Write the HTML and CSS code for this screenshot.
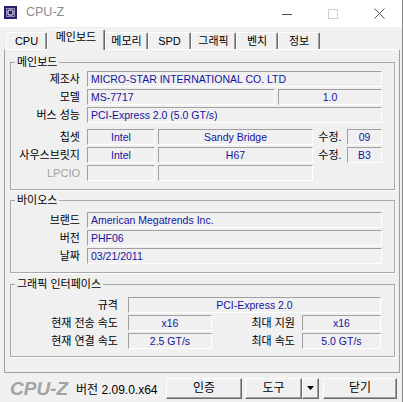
FILE: index.html
```html
<!DOCTYPE html>
<html lang="ko">
<head>
<meta charset="utf-8">
<title>CPU-Z</title>
<link rel="stylesheet" href="styles.css">
</head>
<body>
<div class="window">
  <header class="titlebar">
    <svg class="app-icon" width="13" height="13" viewBox="0 0 13 13">
      <rect width="13" height="13" fill="#2d1d6e"/>
      <rect x="2.5" y="2.5" width="8" height="8" fill="none" stroke="#fff" stroke-width="1" stroke-dasharray="1 1"/>
      <rect x="4" y="4" width="5" height="5" rx="1" fill="none" stroke="#fff" stroke-width="1"/>
    </svg>
    <span class="title">CPU-Z</span>
    <div class="controls">
      <span class="ctl"><svg width="10" height="10" viewBox="0 0 10 10"><line x1="0" y1="5.5" x2="10" y2="5.5" stroke="#4a4a4a" stroke-width="1"/></svg></span>
      <span class="ctl"><svg width="10" height="10" viewBox="0 0 10 10"><rect x="0.5" y="0.5" width="9" height="9" fill="none" stroke="#cfcfcf" stroke-width="1"/></svg></span>
      <span class="ctl"><svg width="11" height="11" viewBox="0 0 11 11"><path d="M0.5 0.5 L10.5 10.5 M10.5 0.5 L0.5 10.5" stroke="#555" stroke-width="1" fill="none"/></svg></span>
    </div>
  </header>

  <nav class="tabs">
    <span class="tab t41">CPU</span>
    <span class="tab t58 active">메인보드</span>
    <span class="tab t43">메모리</span>
    <span class="tab t43">SPD</span>
    <span class="tab t45">그래픽</span>
    <span class="tab t42">벤치</span>
    <span class="tab t42">정보</span>
  </nav>

  <main class="panel">
    <fieldset class="group g1">
      <legend>메인보드</legend>
      <div class="row"><span class="lbl">제조사</span><span class="fld l w295">MICRO-STAR INTERNATIONAL CO. LTD</span></div>
      <div class="row"><span class="lbl">모델</span><span class="fld l w188">MS-7717</span><span class="fld w104 ml3">1.0</span></div>
      <div class="row"><span class="lbl">버스 성능</span><span class="fld l w295">PCI-Express 2.0 (5.0 GT/s)</span></div>
      <div class="row sep"><span class="lbl">칩셋</span><span class="fld w68">Intel</span><span class="fld w155 ml3">Sandy Bridge</span><span class="rev">수정.</span><span class="fld w35">09</span></div>
      <div class="row"><span class="lbl">사우스브릿지</span><span class="fld w68">Intel</span><span class="fld w155 ml3">H67</span><span class="rev">수정.</span><span class="fld w35">B3</span></div>
      <div class="row"><span class="lbl dim">LPCIO</span><span class="fld w68"></span><span class="fld w155 ml3"></span></div>
    </fieldset>

    <fieldset class="group g2">
      <legend>바이오스</legend>
      <div class="row"><span class="lbl">브랜드</span><span class="fld l w295">American Megatrends Inc.</span></div>
      <div class="row"><span class="lbl">버전</span><span class="fld l w295">PHF06</span></div>
      <div class="row"><span class="lbl">날짜</span><span class="fld l w295">03/21/2011</span></div>
    </fieldset>

    <fieldset class="group g3">
      <legend>그래픽 인터페이스</legend>
      <div class="row"><span class="lbl wide">규격</span><span class="fld w253">PCI-Express 2.0</span></div>
      <div class="row"><span class="lbl wide">현재 전송 속도</span><span class="fld w84">x16</span><span class="lbl mid">최대 지원</span><span class="fld w79">x16</span></div>
      <div class="row"><span class="lbl wide">현재 연결 속도</span><span class="fld w84">2.5 GT/s</span><span class="lbl mid">최대 속도</span><span class="fld w79">5.0 GT/s</span></div>
    </fieldset>
  </main>

  <footer class="footer">
    <span class="logo">CPU-Z</span>
    <span class="version">버전 2.09.0.x64</span>
    <div class="buttons">
      <span class="btn b76">인증</span>
      <span class="btn b57 ml3">도구</span>
      <span class="btn b17"><svg width="7" height="4" viewBox="0 0 7 4"><polygon points="0,0 7,0 3.5,4" fill="#000"/></svg></span>
      <span class="btn b74 ml4">닫기</span>
    </div>
  </footer>
</div>
</body>
</html>
```

FILE: styles.css
```css
* { box-sizing: border-box; }
html, body { margin: 0; padding: 0; }
body {
  width: 403px;
  height: 402px;
  overflow: hidden;
  background: #f0f0f0;
  font-family: "Liberation Sans", "Noto Sans CJK KR", sans-serif;
  color: #000;
}
.window {
  width: 403px;
  height: 402px;
  border-right: 1px solid #8a8a8a;
  display: flex;
  flex-direction: column;
}

/* title bar */
.titlebar {
  height: 27px;
  flex: none;
  background: #fff;
  display: flex;
  align-items: flex-start;
}
.app-icon { margin: 6px 0 0 4px; flex: none; }
.title {
  margin-left: 9px;
  font-size: 12.5px;
  line-height: 25px;
  color: #8c8c8c;
}
.controls { margin-left: auto; display: flex; }
.ctl {
  width: 46px;
  height: 27px;
  display: flex;
  align-items: center;
  justify-content: center;
}

/* tabs */
.tabs {
  height: 22px;
  flex: none;
  display: flex;
  align-items: flex-end;
  padding-left: 6px;
  position: relative;
  z-index: 1;
}
.tab {
  height: 17px;
  border-top: 1px solid #fff;
  border-left: 1px solid #fff;
  border-right: 1px solid #696969;
  box-shadow: inset -1px 0 #a0a0a0;
  border-radius: 2px 2px 0 0;
  font-size: 11px;
  line-height: 16px;
  text-align: center;
  white-space: nowrap;
}
.tab.active {
  height: 21px;
  margin-bottom: -1px;
  line-height: 15px;
  background: #f0f0f0;
}
.t41 { width: 41px; }
.t42 { width: 42px; }
.t43 { width: 43px; }
.t45 { width: 45px; }
.t58 { width: 58px; }

/* panel */
.panel {
  width: 396px;
  height: 324px;
  flex: none;
  margin-left: 4px;
  border: 1px solid #a0a0a0;
  border-top-color: #fff;
  display: flex;
  flex-direction: column;
}
.group {
  margin: 0 4px 0 5px;
  padding: 0;
  min-width: 0;
  border: 1px solid #a8a8a8;
  box-shadow: 1px 1px 0 #fff;
}
.group legend {
  margin-left: 4px;
  padding: 0 2px;
  font-size: 11px;
  line-height: 14px;
}
.g1 { margin-top: 5px; padding-top: 2px; padding-bottom: 8px; }
.g2 { margin-top: 3px; padding-top: 5px; padding-bottom: 8px; }
.g3 { margin-top: 4px; padding-top: 6px; padding-bottom: 7px; }

.row {
  display: flex;
  height: 16px;
  margin-bottom: 2px;
}
.row:last-child { margin-bottom: 0; }
.row.sep { margin-top: 6px; }

.lbl {
  width: 70px;
  flex: none;
  margin-right: 6px;
  padding-right: 1px;
  text-align: right;
  font-size: 11px;
  line-height: 16px;
  white-space: nowrap;
}
.lbl.wide { width: 109px; margin-right: 8px; padding-right: 2px; }
.lbl.mid { width: 90px; margin-right: 0; padding-right: 7px; }
.lbl.dim { color: #a0a0a0; }

.rev {
  width: 34px;
  flex: none;
  text-align: center;
  font-size: 11px;
  line-height: 16px;
  white-space: nowrap;
}

.fld {
  flex: none;
  height: 16px;
  border: 1px solid;
  border-color: #a0a0a0 #fff #fff #a0a0a0;
  background: #f0f0f0;
  color: #1414a0;
  font-size: 10.5px;
  line-height: 14px;
  text-align: center;
  white-space: nowrap;
  overflow: hidden;
}
.fld.l { text-align: left; padding-left: 3px; }
.ml3 { margin-left: 3px; }
.ml4 { margin-left: 4px; }
.w35 { width: 35px; }
.w68 { width: 68px; }
.w79 { width: 79px; }
.w84 { width: 84px; }
.w104 { width: 104px; }
.w155 { width: 155px; }
.w188 { width: 188px; }
.w253 { width: 253px; }
.w295 { width: 295px; }

/* footer */
.footer {
  flex: 1;
  display: flex;
  align-items: flex-start;
  padding: 5px 5px 0 10px;
}
.logo {
  font-family: "Liberation Sans", sans-serif;
  font-weight: bold;
  font-style: italic;
  font-size: 19px;
  line-height: 21px;
  color: #a3a3a3;
  white-space: nowrap;
}
.version {
  margin: 2px 0 0 8px;
  font-size: 12px;
  line-height: 21px;
  white-space: nowrap;
}
.buttons {
  margin-left: auto;
  display: flex;
}
.btn {
  height: 21px;
  flex: none;
  display: flex;
  align-items: center;
  justify-content: center;
  border: 1px solid;
  border-color: #fff #696969 #696969 #fff;
  box-shadow: inset -1px -1px #a0a0a0;
  background: #f0f0f0;
  font-size: 12px;
  line-height: 19px;
  padding-bottom: 1px;
}
.b17 { width: 17px; }
.b57 { width: 57px; }
.b74 { width: 74px; }
.b76 { width: 76px; }
```
